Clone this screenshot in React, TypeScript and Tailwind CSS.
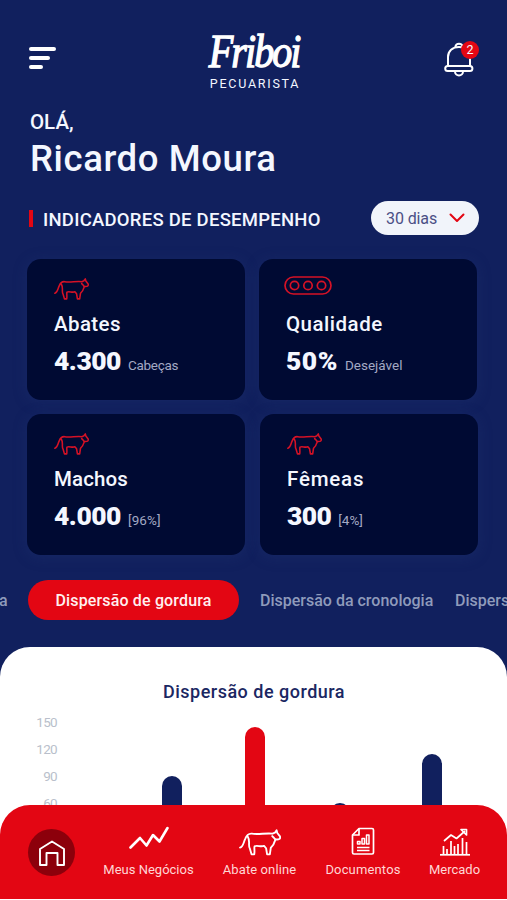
import { ReactNode } from "react";

function Cow({ className }: { className: string }) {
  return (
    <svg viewBox="0 0 124 78" fill="none" stroke="currentColor" strokeLinecap="round" strokeLinejoin="round" className={className}>
      <path d="M3 54 C12 52 13 40 18 29 C22 18 28 12 38 13 C56 16 78 11 99 13 L106 10 L111 3 L113 11 L121 21 C123 29 118 31 108 30 L104 39 C103 46 98 50 94 54 L91 74 H83 L80 56 L74 49 C64 53 54 46 46 50 C44 56 47 62 45 74 H37 L32 57 C26 48 34 34 26 22" />
      <path d="M98 20 L103 25 L107 30" />
    </svg>
  );
}

function QualityIcon() {
  return (
    <svg width="48" height="19" viewBox="0 0 48 19" fill="none" stroke="currentColor" strokeWidth="1.7">
      <rect x="1" y="1" width="46" height="17" rx="8.5" />
      <circle cx="10.5" cy="9.5" r="4.2" />
      <circle cx="24" cy="9.5" r="4.2" />
      <circle cx="37.5" cy="9.5" r="4.2" />
    </svg>
  );
}

type CardProps = {
  icon: ReactNode;
  label: string;
  labelClass: string;
  value: string;
  valueClass: string;
  note: string;
  noteClass?: string;
};

function Card({ icon, label, labelClass, value, valueClass, note, noteClass = "" }: CardProps) {
  return (
    <div className="h-[141px] w-[218px] rounded-[14px] bg-[#000a33] pl-[27px] shadow-[0_2px_14px_rgba(32,52,112,0.4)]">
      <div className="h-[51px] pt-[19px] text-[#d51226]">{icon}</div>
      <div className={`text-[20.5px] leading-7 font-medium ${labelClass}`}>{label}</div>
      <div className="mt-[3px] flex h-10 items-baseline leading-10 whitespace-nowrap">
        <span className={`text-[26.5px] font-black ${valueClass}`}>{value}</span>
        <span className={`ml-[7px] text-[13.5px] text-[#a3a9c4] ${noteClass}`}>{note}</span>
      </div>
    </div>
  );
}

function NavItem({ icon, label, className }: { icon: ReactNode; label: string; className: string }) {
  return (
    <button className={`flex flex-col items-center ${className}`}>
      <span className="flex h-[54px] items-end justify-center pb-[3px]">{icon}</span>
      <span className="text-[13px] leading-[22px] whitespace-nowrap text-[#ffd6d6]">{label}</span>
    </button>
  );
}

const bars = [
  { value: 90, className: "ml-[105px] bg-[#11205e]" },
  { value: 145, className: "ml-[63px] bg-[#e30613]" },
  { value: 60, className: "ml-[65px] bg-[#11205e]" },
  { value: 115, className: "ml-[72px] bg-[#11205e]" },
];

export default function App() {
  return (
    <main className="relative flex h-[900px] w-[507px] flex-col overflow-hidden bg-[#11205e] font-[Roboto,sans-serif] text-[#f4f7ff]">
      <header className="flex h-[108px] shrink-0 items-start pr-[27px] pl-[29px]">
        <button className="mt-[47px] flex w-[60px] flex-col gap-[5px]">
          <span className="h-1 w-[27px] rounded-full bg-white" />
          <span className="h-1 w-[21px] rounded-full bg-white" />
          <span className="h-1 w-[14px] rounded-full bg-white" />
        </button>
        <div className="mt-7 ml-[119px] flex w-[92px] flex-col items-center">
          <span className="scale-x-[.87] font-['Liberation_Serif',serif] text-[46px] leading-[48px] tracking-[-2.2px] text-white italic [-webkit-text-stroke:1.3px_white]">Friboi</span>
          <span className="mr-[-2px] text-[12.5px] leading-[15px] tracking-[1.75px]">PECUARISTA</span>
        </div>
        <button className="relative mt-10 ml-auto flex w-[36px] justify-start">
          <svg width="30" height="38" viewBox="0 0 30 38" fill="none" stroke="white" strokeWidth="2">
            <path d="M4 26 V17 C4 11 8.5 7 15 7 S26 11 26 17 V26" />
            <path d="M11.5 7 V6.5 a3.5 2.8 0 0 1 7 0 V7" />
            <rect x="1.2" y="26" width="27.2" height="5" rx="2.5" />
            <path d="M11 31.5 a4 4 0 0 0 8 0" />
          </svg>
          <span className="absolute top-[1px] left-[17px] h-[18px] w-[18px] rounded-full bg-[#e30613] text-center text-[12.5px] leading-[18px]">2</span>
        </button>
      </header>

      <section className="shrink-0 pl-[30px]">
        <p className="text-[20.5px] leading-7 font-medium">OLÁ,</p>
        <h1 className="mt-px text-[36.5px] leading-[44px] font-medium tracking-[0.6px]">Ricardo Moura</h1>
      </section>

      <section className="mt-5 flex h-[34px] shrink-0 items-center pr-[28px] pl-[29px]">
        <span className="h-[17px] w-1 bg-[#e30613]" />
        <h2 className="mt-[3px] ml-[10px] text-[18.5px] leading-6 font-medium tracking-[0.25px] whitespace-nowrap">INDICADORES DE DESEMPENHO</h2>
        <button className="ml-auto flex h-[34px] w-[108px] shrink-0 items-center justify-between rounded-full bg-[#f1f4fa] pr-[14px] pl-[15px] text-[16px] text-[#4b4f85]">
          <span className="mt-[2px] tracking-[-0.1px]">30 dias</span>
          <svg width="16" height="10" viewBox="0 0 16 10" fill="none" stroke="#e30613" strokeWidth="2" strokeLinecap="round" strokeLinejoin="round">
            <path d="M1.5 1.5 L8 8 L14.5 1.5" />
          </svg>
        </button>
      </section>

      <section className="mt-6 flex shrink-0 flex-col gap-[14px] pl-[27px]">
        <div className="flex gap-[14px]">
          <Card icon={<Cow className="h-[22px] w-[35px] stroke-[5.5]" />} label="Abates" labelClass="tracking-[0.4px]" value="4.300" valueClass="tracking-[-0.5px]" note="Cabeças" noteClass="tracking-[-0.3px]" />
          <Card icon={<div className="-mt-[2px] -ml-[2px]"><QualityIcon /></div>} label="Qualidade" labelClass="tracking-[0.5px]" value="50%" valueClass="tracking-[0.5px]" note="Desejável" />
        </div>
        <div className="flex gap-[15px]">
          <Card icon={<Cow className="h-[22px] w-[35px] stroke-[5.5]" />} label="Machos" labelClass="tracking-[0.1px]" value="4.000" valueClass="tracking-[-0.5px]" note="[96%]" noteClass="tracking-[0.1px]" />
          <Card icon={<Cow className="h-[22px] w-[35px] stroke-[5.5]" />} label="Fêmeas" labelClass="tracking-[0.8px]" value="300" valueClass="tracking-[-0.6px]" note="[4%]" />
        </div>
      </section>

      <nav className="mt-[25px] flex h-10 shrink-0 items-center text-[16px] font-medium whitespace-nowrap text-[#8f9bbb]">
        <span className="mt-[2px] -ml-px w-[29px] shrink-0">a</span>
        <button className="h-10 w-[211px] shrink-0 rounded-full bg-[#e30613] pt-[2px] tracking-[0.15px] text-[#fff0f0]">Dispersão de gordura</button>
        <span className="mt-[2px] ml-[21px] w-[174px] shrink-0">Dispersão da cronologia</span>
        <span className="mt-[2px] ml-[21px] shrink-0">Dispersão</span>
      </nav>

      <section className="mt-[27px] h-[253px] shrink-0 rounded-t-[30px] bg-white pt-[31px]">
        <h3 className="pl-px text-center text-[18px] leading-7 font-medium tracking-[0.5px] text-[#1b2762]">Dispersão de gordura</h3>
        <div className="mt-[3px] flex">
          <div className="w-[57px] text-right text-[13.5px] leading-[27px] tracking-[-0.7px] text-[#b9bfcb]">
            {[150, 120, 90, 60, 30, 0].map((tick) => (
              <div key={tick}>{tick}</div>
            ))}
          </div>
          <div className="flex h-[148px] items-end">
            {bars.map((bar) => (
              <div key={bar.value} className={`w-5 rounded-t-full ${bar.className}`} style={{ height: bar.value * 0.9 }} />
            ))}
          </div>
        </div>
      </section>

      <nav className="absolute bottom-px left-0 flex h-[94px] w-full items-start rounded-t-[30px] bg-[#e30613]">
        <button className="mt-6 ml-7 flex h-[47px] w-[47px] shrink-0 items-center justify-center rounded-full bg-[#8c000b]">
          <svg width="26" height="26" viewBox="0 0 26 26" fill="none" stroke="white" strokeWidth="1.9" strokeLinejoin="round">
            <path d="M1 9 L13 1.5 L25 9 V25 H18.5 V13 H7.5 V25 H1 Z" />
          </svg>
        </button>
        <NavItem
          label="Meus Negócios"
          className="ml-[28px] w-[91px]"
          icon={
            <svg width="40" height="26" viewBox="0 0 40 26" fill="none" stroke="white" strokeWidth="2.6" strokeLinecap="round" strokeLinejoin="round" className="mb-1">
              <path d="M1.5 21.5 L11 12 L17.5 19.5 L24 9 L30.5 15.5 L38.5 2" />
            </svg>
          }
        />
        <NavItem label="Abate online" className="ml-7 w-[75px] tracking-[0.1px]" icon={<Cow className="h-[27px] w-[42px] stroke-[5.5] text-white" />} />
        <NavItem
          label="Documentos"
          className="ml-7 w-[76px] tracking-[0.15px]"
          icon={
            <svg width="24" height="29" viewBox="0 0 24 29" fill="none" stroke="white" strokeWidth="1.7" strokeLinejoin="round">
              <path d="M8 1.5 H21 Q22.5 1.5 22.5 3 V25.5 Q22.5 27 21 27 H3 Q1.5 27 1.5 25.5 V8 Z" />
              <path d="M8 1.5 V8 H1.5" />
              <path d="M6 20.5 H18.5 M6 23.5 H18.5" strokeWidth="1.4" />
              <path d="M6.5 17 V14.5 H9 V17 Z M11 17 V11.5 H13.5 V17 Z M15.5 17 V8 H18 V17 Z" strokeWidth="1.5" />
            </svg>
          }
        />
        <NavItem
          label="Mercado"
          className="ml-7 w-[51px]"
          icon={
            <svg width="30" height="28" viewBox="0 0 30 28" fill="none" stroke="white" strokeWidth="1.7">
              <path d="M0 26.8 H30" />
              <path d="M3.5 26 V18 M7 26 V21 M11 26 V13 M14.5 26 V18 M18 26 V16 M22.5 26 V10 M26.5 26 V14" />
              <path d="M4 13 L11 7 L16.5 10.5 L25 3" strokeLinejoin="round" />
              <path d="M21 1.5 H26.5 V7 Z" strokeLinejoin="round" />
            </svg>
          }
        />
      </nav>
    </main>
  );
}
